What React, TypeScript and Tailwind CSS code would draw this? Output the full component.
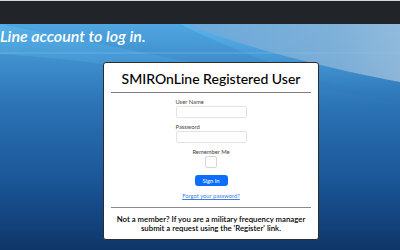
import React from "react";

function Wallpaper() {
  return (
    <svg
      className="absolute inset-0 h-full w-full"
      viewBox="0 0 400 226"
      preserveAspectRatio="none"
    >
      <defs>
        <linearGradient id="base" x1="0" y1="0" x2="0" y2="1">
          <stop offset="0" stopColor="#4fa6e0" />
          <stop offset="0.35" stopColor="#2c74b6" />
          <stop offset="0.7" stopColor="#1a5597" />
          <stop offset="1" stopColor="#0e3668" />
        </linearGradient>
        <linearGradient id="cyan" x1="0" y1="0" x2="0.3" y2="1">
          <stop offset="0" stopColor="#62bdf0" stopOpacity="0.95" />
          <stop offset="1" stopColor="#3b8fd0" stopOpacity="0" />
        </linearGradient>
        <linearGradient id="wisp" x1="0" y1="0" x2="1" y2="0">
          <stop offset="0" stopColor="#6ea8d8" />
          <stop offset="0.7" stopColor="#86b2d8" />
          <stop offset="1" stopColor="#9cbedb" />
        </linearGradient>
      </defs>
      <rect width="400" height="226" fill="url(#base)" />
      <path d="M0 0 L400 0 L400 80 C330 60 250 35 180 0 Z" fill="url(#cyan)" />
      <path d="M0 0 L400 80 L400 110 C300 75 160 40 0 30 Z" fill="url(#cyan)" opacity="0.5" />
      <path d="M185 0 L400 0 L400 58 C330 45 250 25 185 0 Z" fill="url(#wisp)" opacity="0.85" />
      <path d="M0 29 L400 29" stroke="#8cc6ec" strokeOpacity="0.45" strokeWidth="1" />
    </svg>
  );
}

export default function App() {
  return (
    <div className="w-[400px] h-[250px] overflow-hidden bg-[#1a4f8c] font-['Lato',sans-serif]">
      <div className="h-px bg-[#d4d4d4]" />
      <div className="h-[23px] bg-[#212428]" />
      <div className="relative h-[226px]">
        <Wallpaper />
        <div className="relative">
          <h2 className="h-[29px] pt-[2px] text-[16px] italic font-semibold leading-[20px] text-white whitespace-nowrap">
            Line account to log in.
          </h2>
          <div className="flex justify-start pt-[9px] pl-[103px]">
            <div className="w-[216px] h-[178px] rounded-[3px] border-[1.5px] border-[#2c2c2c] bg-white px-[7px] flex flex-col items-center">
              <h1 className="pt-[8px] h-[29px] text-[14px] leading-[16px] font-medium text-black whitespace-nowrap">
                SMIROnLine Registered User
              </h1>
              <div className="w-full border-t-[1.5px] border-[#7d7d7d]" />
              <div className="w-[71px] pt-[4.5px] flex flex-col">
                <label className="text-[5.8px] leading-[8px] text-[#444]">User Name</label>
                <input className="h-[12px] w-full rounded-[2px] border border-[#e3e3e3]" />
                <label className="mt-[5.5px] text-[5.8px] leading-[8px] text-[#444]">Password</label>
                <input type="password" className="h-[12px] w-full rounded-[2px] border border-[#e3e3e3]" />
              </div>
              <div className="pt-[5px] text-[5.8px] leading-[8px] text-[#444]">Remember Me</div>
              <div className="h-[12px] w-[12px] shrink-0 rounded-[2px] border border-[#d6d6d6]" />
              <button className="mt-[7px] h-[11px] w-[33px] rounded-[3px] bg-[#0d6efd] text-[5.8px] leading-[11px] text-white">
                Sign In
              </button>
              <a href="#" className="mt-[6px] text-[5.8px] leading-[8px] text-[#3b7fe6] underline">
                Forgot your password?
              </a>
              <div className="mt-[7px] w-full border-t-[1.5px] border-[#8a8a8a]" />
              <p className="pt-[7px] text-center text-[7.8px] leading-[9px] font-semibold text-black whitespace-nowrap">
                Not a member? If you are a military frequency manager
                <br />
                submit a request using the 'Register' link.
              </p>
            </div>
          </div>
        </div>
      </div>
    </div>
  );
}
